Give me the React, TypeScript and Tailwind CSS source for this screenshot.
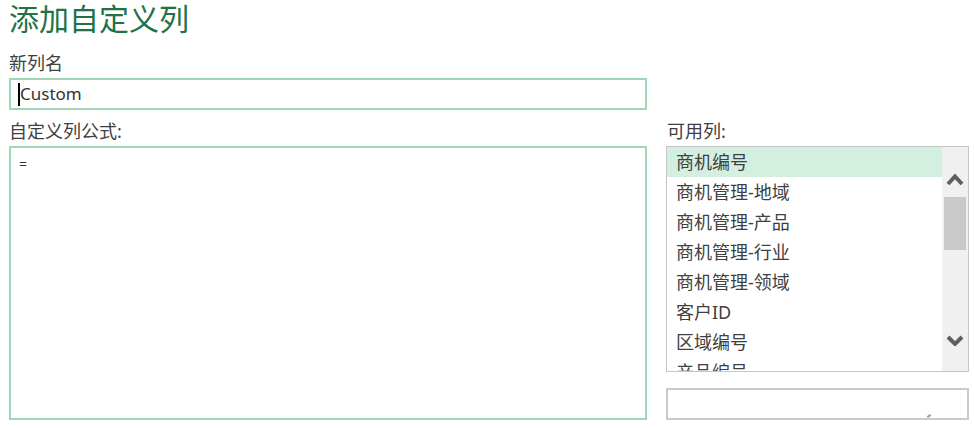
import React from "react";

const items = [
  "商机编号",
  "商机管理-地域",
  "商机管理-产品",
  "商机管理-行业",
  "商机管理-领域",
  "客户ID",
  "区域编号",
  "产品编号",
];

const font = { fontFamily: '"Noto Sans", "Noto Sans CJK SC", sans-serif' };

export default function App() {
  return (
    <div
      className="w-[974px] h-[428px] bg-white overflow-hidden pl-[9px] text-[#404040]"
      style={font}
    >
      <div className="text-[30px] leading-[38px] text-[#217346]">添加自定义列</div>
      <div className="mt-[13px] text-[18px] leading-[24px]">新列名</div>
      <div className="mt-[3px] w-[638px] h-[32px] border-2 border-[#9fd6b6] relative flex items-center pl-[9px] text-[17px] text-[#333333]">
        <span className="absolute left-[7px] top-[3px] w-[2px] h-[23px] bg-black" />
        Custom
      </div>
      <div className="mt-[9px] flex gap-[19px]">
        <div className="w-[638px] flex flex-col">
          <div className="text-[18px] leading-[24px]">自定义列公式:</div>
          <div className="mt-[3px] h-[274px] border-2 border-[#9fd6b6] pl-[8px] pt-[6px] text-[14px] leading-[20px] text-[#333333]">
            =
          </div>
        </div>
        <div className="w-[303px] flex flex-col">
          <div className="text-[18px] leading-[24px] pl-[1px]">可用列:</div>
          <div className="mt-[3px] h-[226px] border border-[#c6c6c6] flex">
            <div className="flex-1 overflow-hidden flex flex-col">
              {items.map((it, i) => (
                <div
                  key={it}
                  className={
                    "shrink-0 h-[30px] leading-[30px] pl-[9px] text-[18px] " +
                    (i === 0 ? "bg-[#d3efe0]" : "")
                  }
                >
                  {it}
                </div>
              ))}
            </div>
            <div className="w-[26px] bg-[#f0f0f0] flex flex-col items-center pt-[26px] pb-[25px]">
              <svg width="18" height="13" viewBox="0 0 18 13">
                <polyline points="2,11 9,3.5 16,11" fill="none" stroke="#5f5f5f" strokeWidth="4" />
              </svg>
              <div className="mt-[11px] w-[22px] h-[53px] bg-[#c9c9c9]" />
              <div className="flex-1" />
              <svg width="18" height="11" viewBox="0 0 18 11">
                <polyline points="2,2 9,9 16,2" fill="none" stroke="#5f5f5f" strokeWidth="4" />
              </svg>
            </div>
          </div>
          <div className="mt-[16px] h-[32px] border-2 border-[#cacaca] relative">
            <span className="absolute right-[36px] bottom-[1px] w-[4px] h-[2px] bg-[#9a9a9a] rotate-[-35deg]" />
          </div>
        </div>
      </div>
    </div>
  );
}
